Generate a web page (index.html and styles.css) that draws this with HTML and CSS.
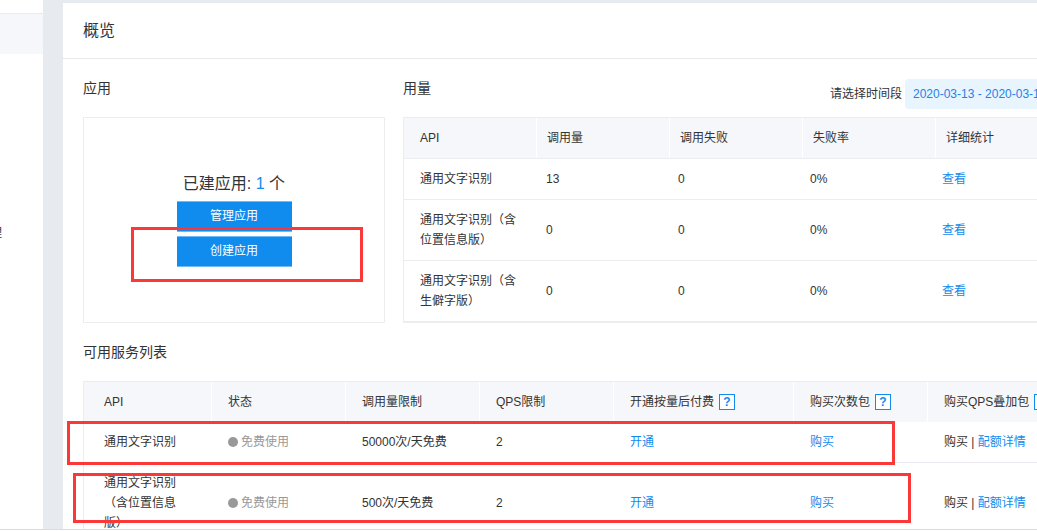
FILE: index.html
```html
<!DOCTYPE html>
<html lang="zh-CN">
<head>
<meta charset="utf-8">
<title>概览</title>
<link rel="stylesheet" href="styles.css">
</head>
<body>
<div class="page">
  <nav class="sidebar">
    <div class="side-active"></div>
    <a class="side-link" href="#">理</a>
  </nav>
  <main class="panel">
    <h1 class="panel-title">概览</h1>
    <div class="content">
      <div class="summary">
        <section class="summary-col">
          <div class="section-head"><h2 class="section-title">应用</h2></div>
          <div class="app-card">
            <p class="app-count">已建应用: <a class="link" href="#">1</a> 个</p>
            <button class="btn" type="button">管理应用</button>
            <button class="btn" type="button">创建应用</button>
          </div>
        </section>
        <section class="summary-col">
          <div class="section-head">
            <h2 class="section-title">用量</h2>
            <div class="period">
              <label for="period">请选择时间段</label>
              <input class="period-input" id="period" type="text" value="2020-03-13 - 2020-03-19" readonly>
            </div>
          </div>
          <table class="usage">
            <thead>
              <tr><th>API</th><th>调用量</th><th>调用失败</th><th>失败率</th><th>详细统计</th></tr>
            </thead>
            <tbody>
              <tr><td>通用文字识别</td><td>13</td><td>0</td><td>0%</td><td><a class="link" href="#">查看</a></td></tr>
              <tr><td>通用文字识别（含位置信息版）</td><td>0</td><td>0</td><td>0%</td><td><a class="link" href="#">查看</a></td></tr>
              <tr><td>通用文字识别（含生僻字版）</td><td>0</td><td>0</td><td>0%</td><td><a class="link" href="#">查看</a></td></tr>
            </tbody>
          </table>
        </section>
      </div>
      <section>
        <h2 class="section-title services-title">可用服务列表</h2>
        <table class="services">
          <colgroup>
            <col class="col-api"><col class="col-std"><col class="col-std"><col class="col-std"><col class="col-wide"><col class="col-std"><col class="col-wide">
          </colgroup>
          <thead>
            <tr>
              <th>API</th>
              <th>状态</th>
              <th>调用量限制</th>
              <th>QPS限制</th>
              <th><span class="with-help">开通按量后付费<button class="help" type="button">?</button></span></th>
              <th><span class="with-help">购买次数包<button class="help" type="button">?</button></span></th>
              <th><span class="with-help">购买QPS叠加包<button class="help" type="button">?</button></span></th>
            </tr>
          </thead>
          <tbody>
            <tr>
              <td>通用文字识别</td>
              <td><span class="status">免费使用</span></td>
              <td>50000次/天免费</td>
              <td>2</td>
              <td><a class="link" href="#">开通</a></td>
              <td><a class="link" href="#">购买</a></td>
              <td>购买 | <a class="link" href="#">配额详情</a></td>
            </tr>
            <tr>
              <td>通用文字识别（含位置信息版）</td>
              <td><span class="status">免费使用</span></td>
              <td>500次/天免费</td>
              <td>2</td>
              <td><a class="link" href="#">开通</a></td>
              <td><a class="link" href="#">购买</a></td>
              <td>购买 | <a class="link" href="#">配额详情</a></td>
            </tr>
          </tbody>
        </table>
      </section>
    </div>
  </main>
  <div class="mark mark-create"></div>
  <div class="mark mark-general"></div>
  <div class="mark mark-position"></div>
</div>
</body>
</html>
```
FILE: styles.css
```css
* { box-sizing: border-box; }

body {
  margin: 0;
  background: #fff;
  color: #333;
  font: 12px/20px "Liberation Sans", "Noto Sans CJK SC", sans-serif;
}

h1, h2, p { margin: 0; font-weight: 400; }

button, input { font: inherit; }

.page {
  position: relative;
  display: flex;
  gap: 20px;
  height: calc(100vh - 1px);
  overflow: hidden;
  background: #e7ebf0;
  border-bottom: 1px solid #d9dbde;
}

.sidebar {
  flex: 0 0 43px;
  padding-top: 13px;
  overflow: hidden;
  background: #fff;
}

.side-active {
  height: 41px;
  background: #f5f7fb;
  border-top: 1px solid #e7ebf0;
}

.side-link {
  display: block;
  margin: 169px 0 0 -10px;
  color: #333;
  text-decoration: none;
}

.panel {
  flex: 1;
  min-width: 0;
  margin-top: 3px;
  background: #fff;
}

.panel-title {
  padding-left: 20px;
  font-size: 16px;
  line-height: 55px;
  border-bottom: 1px solid #e7e9ec;
}

.content { padding: 20px; }

.summary {
  display: grid;
  grid-template-columns: 302px 666px;
  gap: 18px;
}

.summary-col {
  display: flex;
  flex-direction: column;
}

.section-head {
  display: flex;
  justify-content: space-between;
  height: 30px;
  margin-bottom: 8px;
}

.section-title {
  font-size: 14px;
  line-height: 18px;
}

.period {
  display: flex;
  align-items: center;
  gap: 3px;
}

.period-input {
  width: 164px;
  height: 30px;
  padding: 0 8px;
  color: #2482e8;
  background: #e8f5fe;
  border: 0;
  border-radius: 4px;
}

.app-card {
  flex: 1;
  display: flex;
  flex-direction: column;
  align-items: center;
  justify-content: center;
  gap: 4px;
  border: 1px solid #ededf0;
}

.app-count {
  margin-bottom: 3px;
  font-size: 16px;
}

.btn {
  width: 115px;
  height: 31px;
  padding: 0;
  color: #fff;
  background: #108cee;
  border: solid #70bbf5;
  border-width: 1px 0;
}

.link {
  color: #108cee;
  text-decoration: none;
}

table {
  border: 1px solid #ededf0;
  border-spacing: 0;
}

th, td {
  font-weight: 400;
  text-align: left;
}

th {
  background: #f5f7fb;
  border-right: 1px solid #fff;
}

.usage, .usage thead, .usage tbody { display: block; }

.usage tr {
  display: flex;
  align-items: center;
  border-bottom: 1px solid #ededf0;
}

.usage th, .usage td {
  box-sizing: content-box;
  flex: 0 0 112px;
  padding: 10px;
}

.usage th:first-child, .usage td:first-child {
  flex-basis: 106px;
  padding-left: 16px;
}

.services-title {
  margin: 19px 0;
  line-height: 20px;
}

.services {
  width: 1026px;
  table-layout: fixed;
}

.col-api { width: 128px; }
.col-std { width: 134px; }
.col-wide { width: 180px; }

.services th, .services td { padding: 10px 16px; }

.services th:first-child, .services td:first-child {
  padding-left: 20px;
  padding-right: 20px;
}

.services td { border-bottom: 1px solid #e9ebf1; }

.with-help {
  display: flex;
  align-items: center;
  gap: 5px;
}

.help {
  width: 16px;
  height: 16px;
  padding: 0;
  color: #108cee;
  font-weight: 700;
  line-height: 14px;
  background: #fff;
  border: 1px solid #108cee;
}

.status {
  display: flex;
  align-items: center;
  gap: 3px;
  color: #999;
}

.status::before {
  content: "";
  width: 10px;
  height: 10px;
  border-radius: 50%;
  background: #999;
}

/* Highlight frames drawn over the page */
.mark {
  position: absolute;
  border: 3px solid #fb3838;
  pointer-events: none;
}

.mark-create { left: 131px; top: 227px; width: 232px; height: 55px; }
.mark-general { left: 67px; top: 421px; width: 828px; height: 44px; }
.mark-position { left: 73px; top: 473px; width: 838px; height: 50px; }
```
